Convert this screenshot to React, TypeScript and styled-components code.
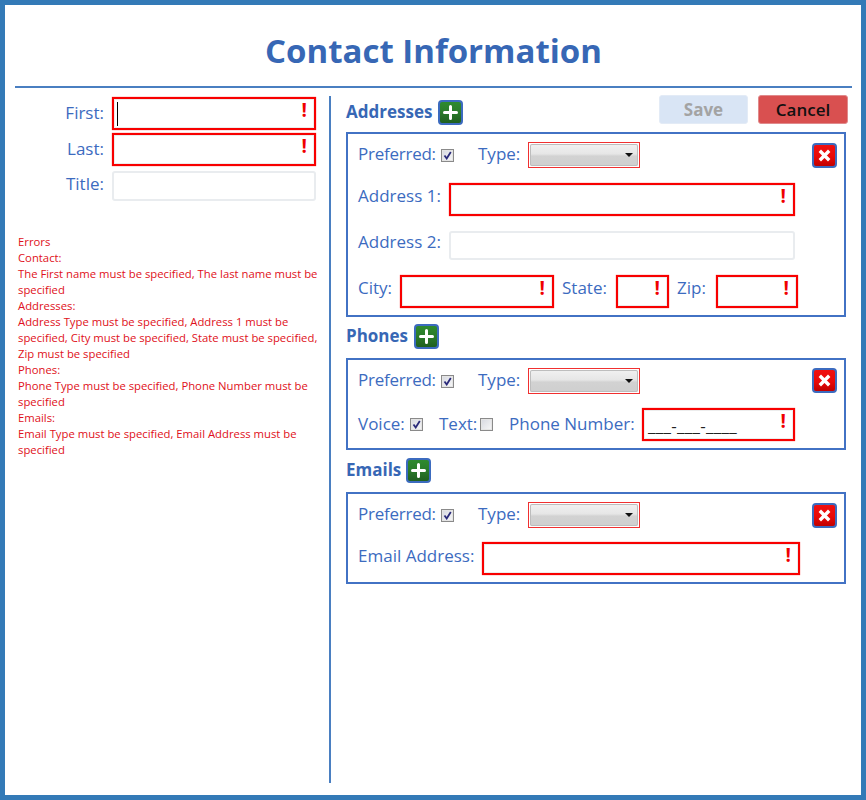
import type { ReactNode } from "react"
import styled, { createGlobalStyle } from "styled-components"

const blue = "#3c6bbf"

const GlobalStyle = createGlobalStyle`
  html, body {
    margin: 0;
    padding: 0;
    background: #fff;
  }
  body {
    font-family: "Open Sans", "Noto Sans", "Liberation Sans", sans-serif;
  }
`

const Frame = styled.div`
  box-sizing: border-box;
  width: 866px;
  height: 800px;
  border: 5px solid #337ab7;
  padding: 0 9px 12px 10px;
  display: flex;
  flex-direction: column;
  overflow: hidden;
`

const Title = styled.h1`
  margin: 0;
  height: 83px;
  box-sizing: border-box;
  border-bottom: 2px solid #4a7fc1;
  padding-top: 24px;
  text-align: center;
  font-size: 33px;
  line-height: 44px;
  font-weight: 700;
  color: #3767b5;
`

const Columns = styled.div`
  flex: 1;
  display: flex;
  padding-top: 8px;
  min-height: 0;
`

const LeftColumn = styled.div`
  width: 314px;
  flex: none;
  border-right: 2px solid #4a7fc1;
  padding-top: 1px;
`

const RightColumn = styled.div`
  flex: 1;
  padding: 4px 0 0 15px;
`

const ContactRow = styled.div<{ $gap?: number }>`
  display: flex;
  align-items: center;
  margin-bottom: ${p => p.$gap ?? 3}px;
`

const ContactLabel = styled.label<{ $up?: number }>`
  width: 89px;
  margin-right: 8px;
  margin-bottom: ${p => p.$up ?? 2}px;
  text-align: right;
  font-size: 17px;
  color: ${blue};
`

const FieldLabel = styled.label<{ $w?: number; $ml?: number; $up?: number }>`
  flex: none;
  width: ${p => (p.$w ? `${p.$w}px` : "auto")};
  margin-left: ${p => p.$ml ?? 0}px;
  margin-bottom: ${p => p.$up ?? 2}px;
  font-size: 17px;
  line-height: 22px;
  color: ${blue};
  white-space: nowrap;
`

const PreferredLabel = styled(FieldLabel)`
  letter-spacing: -0.25px;
`

const InputBox = styled.div<{ $w: number; $h?: number; $error?: boolean }>`
  position: relative;
  flex: none;
  box-sizing: border-box;
  width: ${p => p.$w}px;
  height: ${p => p.$h ?? 33}px;
  border: 2px solid ${p => (p.$error ? "#f80000" : "#e9ecef")};
  border-radius: ${p => (p.$error ? 0 : 3)}px;
  background: #fff;
  box-shadow: ${p => (p.$error ? "inset 0 0 0 1px #ececec, 0 0 1px #f44" : "none")};
`

const Bang = styled.span`
  position: absolute;
  top: -1px;
  right: 7px;
  font-size: 19px;
  line-height: 24px;
  font-weight: 700;
  color: #f00000;
`

const Caret = styled.span`
  position: absolute;
  left: 3px;
  top: 3px;
  width: 1px;
  height: 24px;
  background: #000;
`

const PhoneMask = styled.span`
  position: absolute;
  left: 4px;
  top: 5px;
  font-size: 17px;
  line-height: 22px;
  letter-spacing: 0.3px;
  color: #222;
`

const Errors = styled.div`
  margin: 33px 0 0 3px;
  width: 304px;
  font-size: 11.3px;
  line-height: 16px;
  color: #e01020;
`

const SectionHead = styled.div<{ $mt?: number }>`
  display: flex;
  align-items: center;
  height: 24px;
  margin-top: ${p => p.$mt ?? 0}px;
`

const SectionTitle = styled.h2<{ $w: number }>`
  margin: 0 0 1px;
  width: ${p => p.$w}px;
  font-size: 17px;
  line-height: 24px;
  font-weight: 700;
  color: #3767b5;
`

const Actions = styled.div`
  margin-left: auto;
  display: flex;
  gap: 10px;
  margin-top: -5px;
  margin-right: 4px;
`

const ActionButton = styled.button<{ $primary?: boolean }>`
  height: 29px;
  width: ${p => (p.$primary ? 89 : 90)}px;
  padding: 0;
  border: 1px solid ${p => (p.$primary ? "#e3ebf6" : "#e08a8c")};
  border-radius: 3px;
  background: ${p => (p.$primary ? "#d9e5f5" : "#d95050")};
  color: ${p => (p.$primary ? "#a3a3a3" : "#111")};
  font-family: inherit;
  font-size: 17px;
  font-weight: ${p => (p.$primary ? 700 : 600)};
`

const IconButton = styled.button<{ $kind: "add" | "remove" }>`
  width: 25px;
  height: 25px;
  padding: 0;
  flex: none;
  display: flex;
  align-items: center;
  justify-content: center;
  border: 2px solid #3c6bbf;
  border-radius: 4px;
  background: ${p =>
    p.$kind === "add"
      ? "linear-gradient(#2f8a2f, #2a7a2a 50%, #1f5f1f)"
      : "linear-gradient(#f01010, #e80808 55%, #c00000)"};
`

const DeleteSlot = styled.div<{ $top: number }>`
  position: absolute;
  right: 7px;
  top: ${p => p.$top}px;
`

const Panel = styled.div<{ $h: number; $mt?: number }>`
  position: relative;
  box-sizing: border-box;
  width: 500px;
  height: ${p => p.$h}px;
  margin-top: ${p => p.$mt ?? 8}px;
  border: 2px solid #4272c4;
  padding: 8px 10px 0;
`

const Row = styled.div<{ $mt?: number }>`
  display: flex;
  align-items: center;
  margin-top: ${p => p.$mt ?? 0}px;
`

const Check = styled.span<{ $ml?: number; $mr?: number }>`
  flex: none;
  box-sizing: border-box;
  width: 13px;
  height: 13px;
  margin-left: ${p => p.$ml ?? 0}px;
  margin-right: ${p => p.$mr ?? 0}px;
  border: 1px solid #8a8a8a;
  box-shadow: inset 0 0 0 1px #e4e4e4;
  background: linear-gradient(135deg, #d6d8e0, #f8f8f8);
  display: flex;
  align-items: center;
  justify-content: center;
`

const SelectBox = styled.div`
  box-sizing: border-box;
  flex: none;
  width: 112px;
  height: 26px;
  border: 1px solid #f03030;
  padding: 1px;
`

const SelectFace = styled.div`
  height: 100%;
  border-radius: 2px;
  background: linear-gradient(#f1f1f1, #e6e6e6 45%, #d2d2d2 55%, #cfcfcf);
  box-shadow: inset 0 0 0 1px #bdbdbd;
  display: flex;
  align-items: center;
  justify-content: flex-end;
  padding-right: 5px;
`

const Arrow = styled.span`
  width: 0;
  height: 0;
  border-left: 4px solid transparent;
  border-right: 4px solid transparent;
  border-top: 4px solid #111;
`

function Plus() {
  return (
    <svg width="15" height="15" viewBox="0 0 15 15">
      <path d="M7.5 1.5v12M1.5 7.5h12" stroke="#fff" strokeWidth="3" strokeLinecap="round" />
    </svg>
  )
}

function Cross() {
  return (
    <svg width="15" height="15" viewBox="0 0 15 15">
      <path d="M2.8 2.8l9.4 9.4M12.2 2.8l-9.4 9.4" stroke="#fff" strokeWidth="3.4" />
    </svg>
  )
}

function CheckBox({ on, ml, mr }: { on?: boolean; ml?: number; mr?: number }) {
  return (
    <Check $ml={ml} $mr={mr}>
      {on && (
        <svg width="9" height="9" viewBox="0 0 9 9">
          <path d="M1.5 4.5L3.7 7.5 7.8 1" fill="none" stroke="#2a2a7a" strokeWidth="1.8" />
        </svg>
      )}
    </Check>
  )
}

function Field({ w, h, error, children }: { w: number; h?: number; error?: boolean; children?: ReactNode }) {
  return (
    <InputBox $w={w} $h={h} $error={error}>
      {children}
      {error && <Bang>!</Bang>}
    </InputBox>
  )
}

function PreferredRow() {
  return (
    <Row>
      <PreferredLabel $w={83}>Preferred:</PreferredLabel>
      <CheckBox on mr={24} />
      <FieldLabel $w={50}>Type:</FieldLabel>
      <SelectBox>
        <SelectFace>
          <Arrow />
        </SelectFace>
      </SelectBox>
    </Row>
  )
}

function RemoveButton({ top }: { top: number }) {
  return (
    <DeleteSlot $top={top}>
      <IconButton $kind="remove">
        <Cross />
      </IconButton>
    </DeleteSlot>
  )
}

export default function App() {
  return (
    <Frame>
      <GlobalStyle />
      <Title>Contact Information</Title>
      <Columns>
        <LeftColumn>
          <ContactRow>
            <ContactLabel>First:</ContactLabel>
            <Field w={204} error>
              <Caret />
            </Field>
          </ContactRow>
          <ContactRow $gap={5}>
            <ContactLabel>Last:</ContactLabel>
            <Field w={204} error />
          </ContactRow>
          <ContactRow>
            <ContactLabel $up={6}>Title:</ContactLabel>
            <Field w={204} h={30} />
          </ContactRow>
          <Errors>
            Errors
            <br />
            Contact:
            <br />
            The First name must be specified, The last name must be specified
            <br />
            Addresses:
            <br />
            Address Type must be specified, Address 1 must be specified, City must be specified, State must be specified, Zip must be specified
            <br />
            Phones:
            <br />
            Phone Type must be specified, Phone Number must be specified
            <br />
            Emails:
            <br />
            Email Type must be specified, Email Address must be specified
          </Errors>
        </LeftColumn>
        <RightColumn>
          <SectionHead>
            <SectionTitle $w={92}>Addresses</SectionTitle>
            <IconButton $kind="add">
              <Plus />
            </IconButton>
            <Actions>
              <ActionButton $primary>Save</ActionButton>
              <ActionButton>Cancel</ActionButton>
            </Actions>
          </SectionHead>
          <Panel $h={185}>
            <PreferredRow />
            <RemoveButton top={9} />
            <Row $mt={15}>
              <FieldLabel $w={91} $up={8}>Address 1:</FieldLabel>
              <Field w={346} error />
            </Row>
            <Row $mt={15}>
              <FieldLabel $w={91} $up={7}>Address 2:</FieldLabel>
              <Field w={346} h={29} />
            </Row>
            <Row $mt={15}>
              <FieldLabel $w={42} $up={8}>City:</FieldLabel>
              <Field w={154} error />
              <FieldLabel $w={54} $ml={8} $up={8}>State:</FieldLabel>
              <Field w={53} error />
              <FieldLabel $w={39} $ml={8} $up={8}>Zip:</FieldLabel>
              <Field w={82} error />
            </Row>
          </Panel>
          <SectionHead $mt={7}>
            <SectionTitle $w={68}>Phones</SectionTitle>
            <IconButton $kind="add">
              <Plus />
            </IconButton>
          </SectionHead>
          <Panel $h={92} $mt={10}>
            <PreferredRow />
            <RemoveButton top={8} />
            <Row $mt={14}>
              <FieldLabel $w={52}>Voice:</FieldLabel>
              <CheckBox on mr={16} />
              <FieldLabel $w={41}>Text:</FieldLabel>
              <CheckBox mr={16} />
              <FieldLabel $w={133}>Phone Number:</FieldLabel>
              <Field w={153} error>
                <PhoneMask>___-___-____</PhoneMask>
              </Field>
            </Row>
          </Panel>
          <SectionHead $mt={8}>
            <SectionTitle $w={60}>Emails</SectionTitle>
            <IconButton $kind="add">
              <Plus />
            </IconButton>
          </SectionHead>
          <Panel $h={92} $mt={10}>
            <PreferredRow />
            <RemoveButton top={9} />
            <Row $mt={14}>
              <FieldLabel $w={124} $up={6}>Email Address:</FieldLabel>
              <Field w={318} error />
            </Row>
          </Panel>
        </RightColumn>
      </Columns>
    </Frame>
  )
}
